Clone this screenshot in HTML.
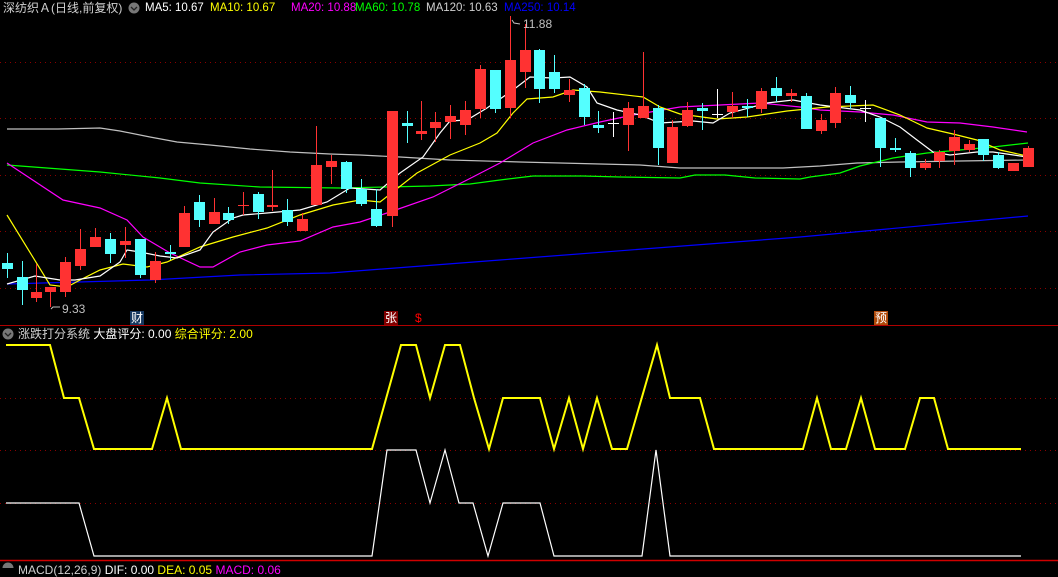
<!DOCTYPE html>
<html><head><meta charset="utf-8"><style>
body{margin:0;background:#000;width:1058px;height:568px;overflow:hidden;position:relative;font-family:"Liberation Sans","Noto Sans CJK SC",sans-serif;}
.t{position:absolute;font-size:12px;white-space:nowrap;line-height:14px}
.h{font-size:11.5px}
svg{position:absolute;left:0;top:0}
</style></head><body>
<svg width="1058" height="568" id="s">
<g stroke="#8a0000" stroke-dasharray="1,4" stroke-width="1">
<line x1="0" x2="1058" y1="62.5" y2="62.5"/><line x1="0" x2="1058" y1="118.5" y2="118.5"/>
<line x1="0" x2="1058" y1="175.5" y2="175.5"/><line x1="0" x2="1058" y1="231.5" y2="231.5"/>
<line x1="0" x2="1058" y1="288.5" y2="288.5"/>
<line x1="0" x2="1058" y1="398.5" y2="398.5"/><line x1="0" x2="1058" y1="450.5" y2="450.5"/>
<line x1="0" x2="1058" y1="503.5" y2="503.5"/>
</g>
<line x1="0" x2="1058" y1="325.5" y2="325.5" stroke="#b00000"/>
<line x1="0" x2="1058" y1="560.5" y2="560.5" stroke="#d00000" stroke-width="1.5"/>
<g fill="none" stroke-width="1.2">
<polyline stroke="#c0c0c0" points="7,129 58,129 100,128 120,131 150,137 177,142 210,145 250,149 290,152 330,154 360,155 400,157 450,160 520,162 600,164 640,165 680,168 783,168 820,166 857,163 900,162 960,161 1028,160"/>
<polyline stroke="#00ff00" points="7,165 100,172 160,178 200,183 260,187 340,188 430,186 470,184 500,180 533,176 583,176 620,177 680,178 695,175 725,175 755,178 800,179 810,177 840,173 860,166 893,158 927,153 960,150 993,147 1028,143"/>
<polyline stroke="#0000ff" points="7,284 150,280 240,275 330,273 500,260 800,237 1028,216"/>
<polyline stroke="#ff00ff" points="7,163 63,200 100,208 127,220 143,237 170,253 200,267 213,267 240,252 267,245 300,241 333,227 360,222 387,213 433,197 467,180 500,163 533,143 567,130 600,122 633,115 680,107 760,103 800,107 820,110 860,112 893,115 927,122 960,123 993,127 1027,132"/>
<polyline stroke="#ffff00" points="7,215 50,285 67,287 80,280 100,270 123,264 147,267 167,262 200,247 233,237 267,228 300,215 333,205 360,200 380,202 417,173 450,155 480,143 497,133 513,113 527,99 553,97 573,90 600,92 643,97 660,107 680,114 717,119 747,117 787,111 827,107 873,105 900,115 927,128 953,134 977,140 1000,150 1027,156"/>
<polyline stroke="#ffffff" points="7,284 35,276 60,280 75,280 100,276 120,262 127,250 140,252 160,256 177,258 200,250 213,232 233,218 243,215 267,213 300,210 327,202 350,188 380,190 400,173 423,157 440,133 450,121 467,120 487,108 513,90 530,77 553,78 570,77 587,87 597,103 617,110 640,115 660,123 693,121 713,123 730,113 767,103 793,100 820,105 860,110 880,117 900,127 917,140 933,152 950,155 977,152 993,152 1027,157"/>
</g>
<g id="c"></g>
<polyline fill="none" stroke="#ffff00" stroke-width="2" points="6,345 50,345 64,398 79,398 94,449 152,449 167,398 181,449 372,449 401,345 416,345 430,398 445,345 460,345 474,398 489,449 503,398 540,398 554,449 569,398 583,449 597,398 612,449 627,449 657,345 670,398 700,398 714,449 803,449 817,398 831,449 846,449 861,398 875,449 905,449 920,398 934,398 948,449 1021,449"/>
<polyline fill="none" stroke="#ffffff" stroke-width="1.2" points="6,503 79,503 94,556 372,556 387,450 416,450 430,503 445,450 459,503 473,503 488,556 503,503 540,503 554,556 642,556 656,450 670,556 1021,556"/>
<polyline fill="none" stroke="#c0c0c0" points="512,20 514,23 520,24"/>
<polyline fill="none" stroke="#c0c0c0" points="51,309 53,307 60,307"/>
<rect x="130" y="311" width="14" height="14" fill="#15375f"/>
<rect x="384" y="311" width="14" height="14" fill="#800000"/>
<rect x="874" y="311" width="14" height="14" fill="#b04a0a"/>
<circle cx="134" cy="8" r="5.5" fill="#777"/><path d="M131,7 L134,10 L137,7" stroke="#222" stroke-width="1.3" fill="none"/>
<circle cx="8" cy="334" r="5.5" fill="#777"/><path d="M5,333 L8,336 L11,333" stroke="#222" stroke-width="1.3" fill="none"/>
<circle cx="8" cy="568" r="5.5" fill="#777"/>
</svg>
<div class="t" style="left:3px;top:1px;color:#d0d0d0">深纺织Ａ(日线,前复权)</div>
<div class="t h" style="left:145px;top:1px;color:#fff">MA5: 10.67</div>
<div class="t h" style="left:210px;top:1px;color:#ff0">MA10: 10.67</div>
<div class="t h" style="left:291px;top:1px;color:#f0f">MA20: 10.88</div>
<div class="t h" style="left:355px;top:1px;color:#0f0">MA60: 10.78</div>
<div class="t h" style="left:426px;top:1px;color:#d0d0d0">MA120: 10.63</div>
<div class="t h" style="left:504px;top:1px;color:#00f">MA250: 10.14</div>
<div class="t" style="left:523px;top:17px;color:#c0c0c0">11.88</div>
<div class="t" style="left:62px;top:302px;color:#c0c0c0">9.33</div>
<div class="t" style="left:131px;top:311px;color:#fff">财</div>
<div class="t" style="left:385px;top:311px;color:#fff">张</div>
<div class="t" style="left:415px;top:311px;color:#f00">$</div>
<div class="t" style="left:875px;top:311px;color:#fff">预</div>
<div class="t" style="left:18px;top:327px;color:#d0d0d0">涨跌打分系统 <span style="color:#fff">大盘评分: 0.00</span> <span style="color:#ff0">综合评分: 2.00</span></div>
<div class="t" style="left:18px;top:563px;color:#d0d0d0">MACD(12,26,9) <span style="color:#fff">DIF: 0.00</span> <span style="color:#ff0">DEA: 0.05</span> <span style="color:#f0f">MACD: 0.06</span></div>
<script>
var d=[[7,'c',263,269,253,278],[22,'c',277,290,261,305],[36,'r',292,298,264,302],[50,'r',287,292,287,307],[65,'r',262,292,257,297],[80,'r',249,266,229,270],[95,'r',237,247,228,247],[110,'c',239,254,233,263],[125,'r',241,245,227,258],[140,'c',239,275,239,278],[155,'r',261,280,252,283],[170,'c',252,254,245,260],[184,'r',213,247,206,247],[199,'c',202,220,195,227],[214,'r',212,224,198,224],[228,'c',213,220,207,224],[243,'r',205,206,192,215],[258,'c',194,212,192,219],[272,'r',205,207,170,211],[287,'c',210,222,199,226],[302,'r',219,231,213,231],[316,'r',165,205,126,205],[331,'r',161,167,155,184],[346,'c',162,189,161,193],[361,'c',189,204,179,206],[376,'c',209,226,189,227],[392,'r',111,216,111,227],[407,'c',123,126,111,143],[421,'r',131,134,101,140],[435,'r',122,128,112,142],[450,'r',116,122,105,139],[465,'r',110,125,101,135],[480,'r',69,109,65,118],[495,'c',70,109,70,113],[510,'r',60,108,16,118],[525,'r',50,72,24,88],[539,'c',50,89,49,103],[554,'c',72,89,55,93],[569,'r',90,95,79,102],[584,'c',88,117,84,125],[598,'c',125,128,111,133],[613,'w',123,123,112,137],[628,'r',108,125,102,151],[643,'r',106,118,52,118],[658,'c',108,148,105,165],[672,'r',127,163,120,163],[687,'r',110,126,102,127],[702,'c',108,111,103,130],[717,'w',114,114,89,118],[732,'r',106,112,92,118],[747,'c',106,108,99,117],[761,'r',91,109,88,113],[776,'c',88,96,77,102],[791,'r',93,96,89,102],[806,'c',96,129,93,129],[821,'r',120,131,114,134],[835,'r',93,123,87,128],[850,'c',95,103,86,109],[865,'w',108,108,100,122],[880,'c',118,148,118,167],[895,'c',148,150,138,152],[910,'c',153,168,151,177],[925,'r',163,168,159,170],[939,'r',152,161,150,168],[954,'r',137,151,130,165],[969,'r',144,150,140,152],[983,'c',139,155,139,161],[998,'c',155,168,152,169],[1013,'r',163,171,163,171],[1028,'r',148,167,146,167]];
var h='';d.forEach(function(a){var col=a[1]=='r'?'#ff3232':a[1]=='c'?'#54ffff':'#ffffff';
h+='<line x1="'+(a[0]+.5)+'" x2="'+(a[0]+.5)+'" y1="'+a[4]+'" y2="'+a[5]+'" stroke="'+col+'"/>';
var bh=Math.max(a[3]-a[2],1);h+='<rect x="'+(a[0]-5)+'" y="'+a[2]+'" width="11" height="'+bh+'" fill="'+col+'"/>';});
document.getElementById('c').innerHTML=h;
</script>
</body></html>
